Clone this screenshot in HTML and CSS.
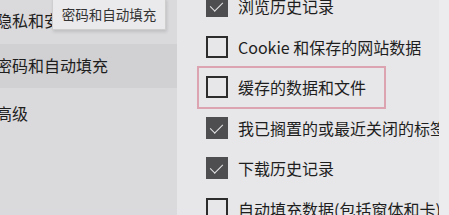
FILE: index.html
```html
<!DOCTYPE html>
<html lang="zh-CN">
  <head>
    <meta charset="UTF-8" />
    <title>清除浏览数据</title>
    <link rel="stylesheet" href="styles.css">
  </head>
  <body>
    <div class="window">
      <div class="sidebar">
        <div class="nav-item">隐私和安全</div>
        <div class="nav-item selected">密码和自动填充</div>
        <div class="nav-item advanced">高级</div>
        <div class="tooltip">密码和自动填充</div>
      </div>

      <div class="panel">
        <ul class="options">
          <li class="option"><span class="box checked"></span>浏览历史记录</li>
          <li class="option"><span class="box"></span>Cookie 和保存的网站数据</li>
          <li class="option focus"><span class="box"></span>缓存的数据和文件</li>
          <li class="option"><span class="box checked"></span>我已搁置的或最近关闭的标签页</li>
          <li class="option"><span class="box checked"></span>下载历史记录</li>
          <li class="option"><span class="box"></span>自动填充数据(包括窗体和卡)</li>
        </ul>
      </div>

      <div class="edge"></div>
    </div>
  </body>
</html>
```

FILE: styles.css
```css
* {
  margin: 0;
  padding: 0;
  box-sizing: border-box;
}

body {
  font-family: "Noto Sans CJK SC", "Noto Sans", sans-serif;
  color: #1e1e1e;
  background: #e7e6e8;
}

.window {
  display: flex;
  width: 449px;
  height: 215px;
  overflow: hidden;
}

/* left menu */
.sidebar {
  position: relative;
  width: 177px;
  flex-shrink: 0;
  background: #dad9db;
  padding-top: 2px;
}

.nav-item {
  height: 42px;
  line-height: 36px;
  font-size: 16px;
  margin-left: -4px;
  white-space: nowrap;
}

.nav-item.selected {
  background: #d1d0d2;
  height: 44px;
  line-height: 43px;
  margin-left: 0;
  text-indent: -4px;
}

.nav-item.advanced {
  line-height: 50px;
}

.tooltip {
  position: absolute;
  left: 52px;
  top: -2px;
  width: 114px;
  height: 32px;
  background: #eae9eb;
  border: 1px solid #cfcecf;
  box-shadow: 1px 2px 3px rgba(0, 0, 0, 0.12);
  font-size: 13.5px;
  line-height: 31px;
  text-align: center;
  color: #333;
}

/* right list */
.panel {
  width: 262px;
  flex-shrink: 0;
  overflow: hidden;
  background: #e7e6e8;
}

.options {
  list-style: none;
  margin-top: -14px;
  padding-left: 21px;
}

.option {
  display: flex;
  align-items: center;
  gap: 10px;
  height: 40.5px;
  padding-left: 8px;
  font-size: 16px;
  white-space: nowrap;
}

.option.focus {
  width: 187px;
  outline: 2px solid #dca4b0;
  outline-offset: -1px;
}

.box {
  width: 22px;
  height: 22px;
  flex-shrink: 0;
  border: 2px solid #2c2c2c;
}

.box.checked {
  border-color: #4e4e50;
  background: #4e4e50;
  position: relative;
}

.box.checked::after {
  content: "";
  position: absolute;
  left: 5px;
  top: 2px;
  width: 6px;
  height: 11px;
  border: solid #e4e4e6;
  border-width: 0 1.5px 1.5px 0;
  transform: rotate(45deg);
}

.edge {
  flex: 1;
  background: #ecebed;
}
```
